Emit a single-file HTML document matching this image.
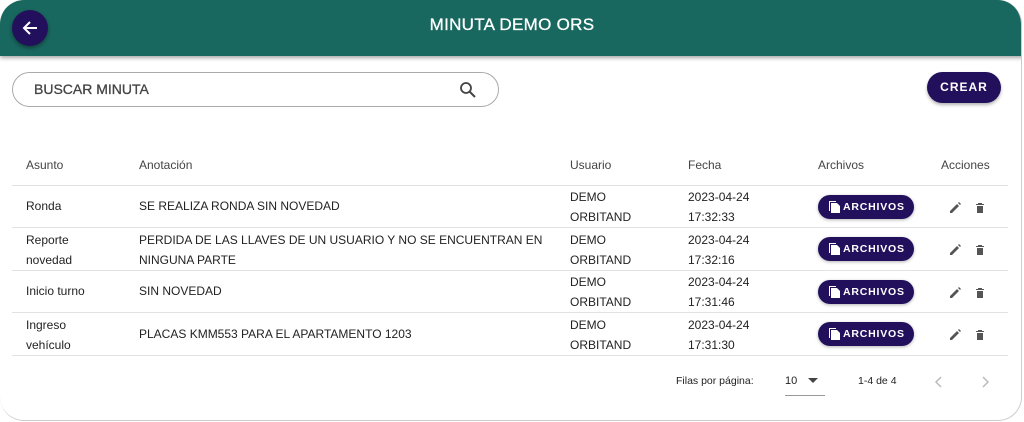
<!DOCTYPE html>
<html><head><meta charset="utf-8"><style>
*{box-sizing:border-box;margin:0;padding:0}
body{width:1024px;height:422px;background:#fff;font-family:"Liberation Sans",sans-serif;position:relative;overflow:hidden}
.card{position:absolute;left:0;top:0;width:1022px;height:421px;border-radius:24px;border-right:1px solid #ccc;border-bottom:1px solid #ccc;overflow:hidden;background:#fff}
.hdr{position:absolute;left:0;top:0;width:1024px;height:56px;background:#196860;box-shadow:0 2px 4px rgba(0,0,0,.35);color:#fff;text-align:center;font-size:17px;line-height:50px;letter-spacing:.3px;-webkit-text-stroke:.3px #fff}
.back{position:absolute;left:12px;top:10px;width:36px;height:36px;border-radius:50%;background:#23105c;box-shadow:0 2px 4px rgba(0,0,0,.4)}
.search{position:absolute;left:12px;top:72px;width:487px;height:35px;border:1px solid #aaa;border-radius:18px;font-size:14px;color:#444;padding-left:21px;line-height:33px;-webkit-text-stroke:.3px #444}
.crear{position:absolute;left:927px;top:72px;width:74px;height:31px;border-radius:16px;background:#23105c;color:#fff;font-size:12px;font-weight:bold;letter-spacing:1px;text-align:center;line-height:31px;box-shadow:0 2px 3px rgba(0,0,0,.3)}
.t{position:absolute;font-size:12px;color:#222}
.th{color:#444}
.line{position:absolute;left:12px;width:996px;height:1px;background:#e2e2e2}
.btn{position:absolute;left:818px;width:96px;height:24px;border-radius:12px;background:#23105c;color:#fff;font-size:10.5px;font-weight:bold;letter-spacing:.8px;line-height:24px;padding-left:25px;box-shadow:0 1px 3px rgba(0,0,0,.3)}
.btn svg{position:absolute;left:10px;top:5px}
.ic{position:absolute}
</style></head><body><div class="card">
<div class="hdr">MINUTA DEMO ORS</div>
<div class="back"><svg width="36" height="36" viewBox="0 0 36 36"><path d="M25 18H12M18 12l-6 6 6 6" stroke="#fff" stroke-width="2" fill="none"/></svg></div>
<div class="search">BUSCAR MINUTA<svg style="position:absolute;left:446px;top:8px" width="18" height="18" viewBox="0 0 18 18"><circle cx="7" cy="7" r="5" stroke="#444" stroke-width="1.8" fill="none"/><path d="M11 11l5 5" stroke="#444" stroke-width="2"/></svg></div>
<div class="crear">CREAR</div>
<div class="t th" style="left:26px;top:158px">Asunto</div>
<div class="t th" style="left:139px;top:158px">Anotación</div>
<div class="t th" style="left:570px;top:158px">Usuario</div>
<div class="t th" style="left:688px;top:158px">Fecha</div>
<div class="t th" style="left:818px;top:158px">Archivos</div>
<div class="t th" style="left:941px;top:158px">Acciones</div>
<div class="line" style="top:185px"></div>
<div class="line" style="top:227px"></div>
<div class="line" style="top:270px"></div>
<div class="line" style="top:312px"></div>
<div class="line" style="top:355px"></div>

<div class="t" style="left:26px;top:199px">Ronda</div>
<div class="t" style="left:139px;top:199px">SE REALIZA RONDA SIN NOVEDAD</div>
<div class="t" style="left:570px;top:187px;line-height:20px">DEMO<br>ORBITAND</div>
<div class="t" style="left:688px;top:187px;line-height:20px">2023-04-24<br>17:32:33</div>

<div class="t" style="left:26px;top:230px;line-height:20px">Reporte<br>novedad</div>
<div class="t" style="left:139px;top:230px;line-height:20px">PERDIDA DE LAS LLAVES DE UN USUARIO Y NO SE ENCUENTRAN EN<br>NINGUNA PARTE</div>
<div class="t" style="left:570px;top:230px;line-height:20px">DEMO<br>ORBITAND</div>
<div class="t" style="left:688px;top:230px;line-height:20px">2023-04-24<br>17:32:16</div>

<div class="t" style="left:26px;top:284px">Inicio turno</div>
<div class="t" style="left:139px;top:284px">SIN NOVEDAD</div>
<div class="t" style="left:570px;top:272px;line-height:20px">DEMO<br>ORBITAND</div>
<div class="t" style="left:688px;top:272px;line-height:20px">2023-04-24<br>17:31:46</div>

<div class="t" style="left:26px;top:315px;line-height:20px">Ingreso<br>vehículo</div>
<div class="t" style="left:139px;top:327px">PLACAS KMM553 PARA EL APARTAMENTO 1203</div>
<div class="t" style="left:570px;top:315px;line-height:20px">DEMO<br>ORBITAND</div>
<div class="t" style="left:688px;top:315px;line-height:20px">2023-04-24<br>17:31:30</div>

<div class="btn" style="top:195px"><svg width="13" height="14" viewBox="0 0 13 14"><path d="M1 1h7v1H2v9H1z" fill="#fff"/><path d="M3 3h6l3 3v7H3z" fill="#fff"/></svg>ARCHIVOS</div>
<div class="btn" style="top:237px"><svg width="13" height="14" viewBox="0 0 13 14"><path d="M1 1h7v1H2v9H1z" fill="#fff"/><path d="M3 3h6l3 3v7H3z" fill="#fff"/></svg>ARCHIVOS</div>
<div class="btn" style="top:280px"><svg width="13" height="14" viewBox="0 0 13 14"><path d="M1 1h7v1H2v9H1z" fill="#fff"/><path d="M3 3h6l3 3v7H3z" fill="#fff"/></svg>ARCHIVOS</div>
<div class="btn" style="top:322px"><svg width="13" height="14" viewBox="0 0 13 14"><path d="M1 1h7v1H2v9H1z" fill="#fff"/><path d="M3 3h6l3 3v7H3z" fill="#fff"/></svg>ARCHIVOS</div>

<svg class="ic" style="left:949px;top:200px" width="40" height="150" viewBox="0 0 40 150">
<g id="r"><path d="M1 11l7-7 2 2-7 7H1z M9 3l1-1 2 2-1 1z" fill="#555"/><path d="M27 4h8v1h-8z M28 6h6v7h-6z M29 3h4v1h-4z" fill="#555"/></g>
<use href="#r" y="42"/><use href="#r" y="85"/><use href="#r" y="127"/>
</svg>

<div class="t" style="left:676px;top:375px;font-size:10.5px">Filas por página:</div>
<div class="t" style="left:785px;top:375px;font-size:11px">10</div>
<svg class="ic" style="left:808px;top:378px" width="12" height="6"><path d="M0 0h10L5 5z" fill="#444"/></svg>
<div class="line" style="left:785px;top:395px;width:40px;background:#999"></div>
<div class="t" style="left:858px;top:375px;font-size:10.5px">1-4 de 4</div>
<svg class="ic" style="left:934px;top:375px" width="60" height="14"><path d="M7 2L2 7l5 5" stroke="#bbb" stroke-width="1.5" fill="none"/><path d="M49 2l5 5-5 5" stroke="#bbb" stroke-width="1.5" fill="none"/></svg>
</div></body></html>
